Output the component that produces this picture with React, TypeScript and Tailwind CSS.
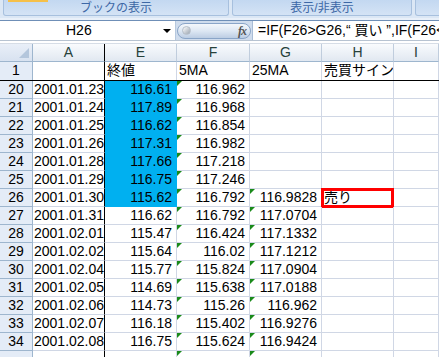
import React from "react";

type Row = { n: number; a: string; e: string; f: string; g?: string; h?: string; blue?: boolean };

const ROWS: Row[] = [
  { n: 20, a: "2001.01.23", e: "116.61", f: "116.962", blue: true },
  { n: 21, a: "2001.01.24", e: "117.89", f: "116.968", blue: true },
  { n: 22, a: "2001.01.25", e: "116.62", f: "116.854", blue: true },
  { n: 23, a: "2001.01.26", e: "117.31", f: "116.982", blue: true },
  { n: 24, a: "2001.01.28", e: "117.66", f: "117.218", blue: true },
  { n: 25, a: "2001.01.29", e: "116.75", f: "117.246", blue: true },
  { n: 26, a: "2001.01.30", e: "115.62", f: "116.792", g: "116.9828", h: "売り", blue: true },
  { n: 27, a: "2001.01.31", e: "116.62", f: "116.792", g: "117.0704" },
  { n: 28, a: "2001.02.01", e: "115.47", f: "116.424", g: "117.1332" },
  { n: 29, a: "2001.02.02", e: "115.64", f: "116.02", g: "117.1212" },
  { n: 30, a: "2001.02.04", e: "115.77", f: "115.824", g: "117.0904" },
  { n: 31, a: "2001.02.05", e: "114.69", f: "115.638", g: "117.0188" },
  { n: 32, a: "2001.02.06", e: "114.73", f: "115.26", g: "116.962" },
  { n: 33, a: "2001.02.07", e: "116.18", f: "115.402", g: "116.9276" },
  { n: 34, a: "2001.02.08", e: "116.75", f: "115.624", g: "116.9424" },
];

const FONT = "font-['Liberation_Sans','Noto_Sans_CJK_JP',sans-serif]";
const GRID = "grid grid-cols-[33px_72px_72px_73px_72px_72px_1fr]";
const cell = "h-[18px] border-r border-b border-[#d0d7e5] text-[14px] leading-[17px] text-black whitespace-nowrap overflow-hidden";

function Tri() {
  return (
    <span className="absolute left-0 top-0 w-0 h-0 border-t-[5px] border-r-[5px] border-t-[#1a8a1a] border-r-transparent" />
  );
}

function RibbonGroup({ label, w }: { label: string; w: string }) {
  return (
    <div className={`${w} h-[16px] rounded-b-[3px] border-x border-b border-[#a7c0de] bg-gradient-to-b from-[#c3d8f1] to-[#d4e3f5] flex items-center justify-center text-[12px] text-[#3d68a6] shrink-0`}>
      {label}
    </div>
  );
}

export default function App() {
  return (
    <div className={`w-[439px] h-[357px] overflow-hidden bg-white ${FONT}`}>
      {/* ribbon */}
      <div className="h-[18px] bg-[#dbe7f5] flex gap-[3px] pl-[3px] relative">
        <div className="absolute left-[8px] top-0 w-[40px] h-[2px] bg-[#f5c04a]" />
        <RibbonGroup label="ブックの表示" w="w-[226px]" />
        <RibbonGroup label="表示/非表示" w="w-[180px]" />
        <RibbonGroup label="" w="w-[40px]" />
      </div>
      <div className="h-[3px] bg-[#e9f0f9] border-b border-[#6f8fb7]" />
      {/* formula bar */}
      <div className="h-[19px] flex items-stretch bg-[#cfdced]">
        <div className="w-[176px] bg-white flex items-center relative border-r border-[#b6c8de]">
          <span className="absolute left-[66px] text-[14px]">H26</span>
          <span className="absolute left-[163px] top-[8px] w-0 h-0 border-x-[4px] border-t-[4px] border-x-transparent border-t-black" />
        </div>
        <div className="w-[76px] flex items-center px-[1px]">
          <div className="w-full h-[16px] rounded-full border border-[#8aa5c8] bg-gradient-to-b from-[#f4f7fb] via-[#dde7f3] to-[#bccde3] flex items-center justify-between pl-[4px] pr-[4px]">
            <span className="w-[9px] h-[9px] rounded-full bg-gradient-to-br from-[#ffffff] to-[#9aa4b0] border border-[#b5bec9]" />
            <span className="font-['Liberation_Serif',serif] italic font-bold text-[12px] text-[#555] tracking-[-1px]">fx</span>
          </div>
        </div>
        <div className="flex-1 bg-white border-l border-[#a9bdd6] flex items-center pl-[5px] text-[14px] whitespace-nowrap overflow-hidden">
          =IF(F26&gt;G26,“ 買い ”,IF(F26&lt;
        </div>
      </div>
      <div className="h-[4px] bg-white border-t border-[#b7c3d1] border-b border-b-[#d6dde6]" />
      {/* column headers */}
      <div className={`${GRID} h-[18px]`}>
        <div className="border-r border-b border-[#9eb6ce] bg-gradient-to-b from-[#e9eff8] to-[#d8e2f0] relative">
          <svg className="absolute right-[3px] bottom-[3px]" width="10" height="10" viewBox="0 0 10 10">
            <polygon points="10,0 10,10 0,10" fill="#b4c6dc" />
          </svg>
        </div>
        {["A", "E", "F", "G", "H", "I"].map((c, i) => (
          <div
            key={c}
            className={`border-r border-b border-[#c0cddd] border-b-[#9eb6ce] bg-gradient-to-b from-[#f9fbfd] to-[#e1e8f1] text-[14px] leading-[17px] text-center text-[#27413a] ${i === 0 ? "border-r-black" : ""}`}
          >
            {c}
          </div>
        ))}
      </div>
      {/* row 1 */}
      <div className={`${GRID} border-b border-black`}>
        <div className={`${cell} !border-b-0 !border-r-[#9eb6ce] bg-[#e4ecf7] text-center text-[#27413a]`}>1</div>
        <div className={`${cell} !border-b-0 !border-r-black`} />
        <div className={`${cell} !border-b-0 pl-[2px]`}>終値</div>
        <div className={`${cell} !border-b-0 pl-[2px]`}>5MA</div>
        <div className={`${cell} !border-b-0 pl-[2px]`}>25MA</div>
        <div className={`${cell} !border-b-0 pl-[2px]`}>売買サイン</div>
        <div className={`${cell} !border-b-0`} />
      </div>
      {ROWS.map((r) => (
        <div key={r.n} className={GRID}>
          <div className={`${cell} !border-r-[#9eb6ce] !border-b-[#9eb6ce] bg-[#e4ecf7] text-center text-[#27413a]`}>{r.n}</div>
          <div className={`${cell} !border-r-black pl-[1px]`}>{r.a}</div>
          <div className={`${cell} text-right pr-[4px] ${r.blue ? "bg-[#00b0f0] !border-b-[#00b0f0] !border-r-[#00b0f0]" : ""}`}>{r.e}</div>
          <div className={`${cell} text-right pr-[4px] relative`}>
            <Tri />
            {r.f}
          </div>
          <div className={`${cell} text-right pr-[4px] relative`}>
            {r.g && <Tri />}
            {r.g}
          </div>
          <div className={`${cell} relative !overflow-visible pl-[2px]`}>
            {r.h && <span className="absolute -left-[1px] -top-[1px] w-[73px] h-[20px] border-[3px] border-[#ff0000]" />}
            {r.h}
          </div>
          <div className={cell} />
        </div>
      ))}
      <div className={GRID}>
        <div className={`${cell} !border-r-[#9eb6ce] bg-[#e4ecf7]`} />
        <div className={`${cell} !border-r-black`} />
        <div className={cell} />
        <div className={`${cell} relative`}><Tri /></div>
        <div className={`${cell} relative`}><Tri /></div>
        <div className={cell} />
        <div className={cell} />
      </div>
    </div>
  );
}
